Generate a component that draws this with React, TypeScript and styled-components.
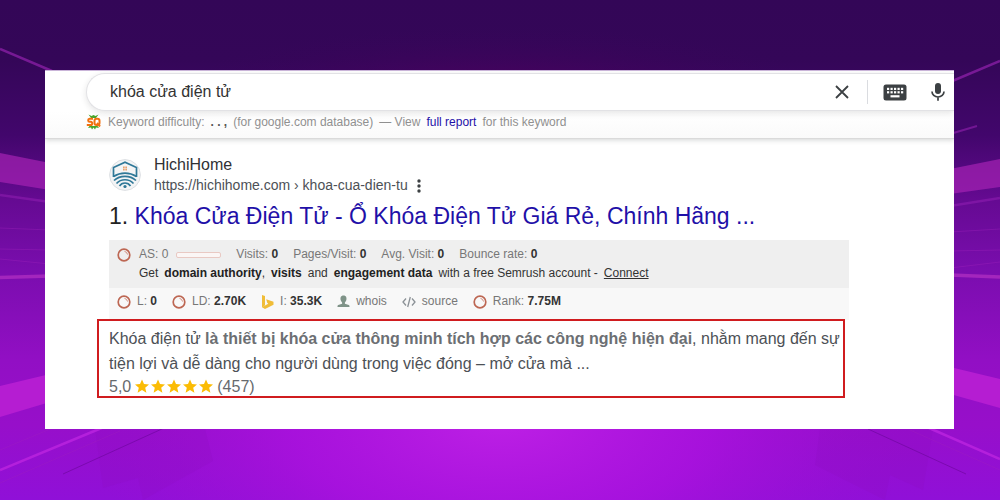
import React from "react";
import styled, { createGlobalStyle } from "styled-components";

const GlobalStyle = createGlobalStyle`
  * { box-sizing: border-box; }
  body { margin: 0; font-family: "Liberation Sans", Arial, sans-serif; }
`;

const Page = styled.main`
  position: relative;
  min-height: 100vh;
  padding: 70px 46px 71px 45px;
  background: linear-gradient(#330657 0%, #340658 12%, #42066c 27%, #650a92 40%, #7a0dae 54%, #920fc4 72%, #970fca 85%, #9010d8 100%);
`;

const Backdrop = styled.svg`
  position: absolute;
  inset: 0;
  width: 100%;
  height: 100%;
`;

const Card = styled.section`
  position: relative;
  overflow: hidden;
  background: #fff;
  border-top: 1px solid #c9b4d8;
  padding-bottom: 31px;
`;

const Header = styled.header`
  padding: 2px 0 8px 41px;
  border-bottom: 1px solid #dadada;
  background: linear-gradient(#fff 60%, #fafafa);
  box-shadow: 0 1px 5px rgba(32, 33, 36, 0.2);
`;

const SearchBar = styled.form`
  display: flex;
  align-items: center;
  height: 38px;
  padding: 0 9px 0 23px;
  border: 1px solid #e2e2e5;
  border-right: 0;
  border-radius: 19px 0 0 19px;
  background: #fff;
  box-shadow: 0 2px 6px rgba(32, 33, 36, 0.12);
`;

const SearchInput = styled.input`
  flex: 1;
  min-width: 0;
  padding: 0;
  border: 0;
  outline: 0;
  background: none;
  color: #333;
  font: 16px/24px "Liberation Sans", Arial, sans-serif;
`;

const IconButton = styled.button`
  display: flex;
  padding: 0;
  border: 0;
  background: none;
  color: #3c4043;
`;

const Divider = styled.span`
  width: 1px;
  height: 24px;
  margin: 0 15px 0 18px;
  background: #dadce0;
`;

const Tools = styled.div`
  display: flex;
  align-items: center;
  gap: 24px;
`;

const Difficulty = styled.div`
  display: flex;
  align-items: center;
  gap: 7px;
  margin-top: 3px;
  color: #909090;
  font-size: 12px;
  line-height: 16px;
  white-space: nowrap;
`;

const Phrases = styled.p`
  display: flex;
  gap: 6px;
  margin: 0;
`;

const Dots = styled.b`
  color: #555;
`;

const ReportLink = styled.a`
  color: #1f10a8;
  text-decoration: none;
`;

const Result = styled.article`
  padding: 15px 105px 0 64px;
`;

const Site = styled.div`
  display: flex;
  align-items: center;
  gap: 13px;
`;

const SiteName = styled.div`
  color: #303134;
  font-size: 16px;
  line-height: 21px;
`;

const SiteUrl = styled.div`
  display: flex;
  align-items: center;
  gap: 8px;
  color: #4d5156;
  font-size: 14px;
  line-height: 21px;
`;

const Title = styled.h3`
  margin: 5px 0 9px;
  color: #222;
  font-size: 23px;
  font-weight: 400;
  line-height: 30px;
  white-space: nowrap;
`;

const TitleLink = styled.a`
  color: #1f10a8;
  text-decoration: none;
`;

const Metrics = styled.div`
  color: #777;
  font-size: 12px;
  line-height: 19px;

  b { color: #333; }
`;

const Traffic = styled.div`
  height: 48px;
  padding: 5px 8px;
  background: #efefef;
`;

const MetricRow = styled.div`
  display: flex;
  align-items: center;
  gap: 15px;
`;

const Metric = styled.span<{ $gap?: number }>`
  display: flex;
  align-items: center;
  gap: ${(p) => p.$gap ?? 6}px;
  white-space: nowrap;
`;

const Bar = styled.span`
  width: 45px;
  height: 6px;
  border: 1px solid #e9c9c3;
  border-radius: 2px;
  background: #fbf6f5;
`;

const Promo = styled.div`
  display: flex;
  gap: 6px;
  padding-left: 22px;
  color: #333;
  white-space: nowrap;

  b { color: #222; }
`;

const ConnectLink = styled.a`
  color: #333;
`;

const Links = styled.div`
  height: 32px;
  padding: 4px 8px;
  background: #f8f8f8;
`;

const Snippet = styled.div`
  margin: -1px 4px 0 -12px;
  padding: 5px 0 0 10px;
  border: 2px solid #d01c1f;
  background: #fff;
  color: #4d5156;
  font-size: 16px;
  line-height: 25px;

  p { margin: 0; }
  b { color: #6c6f73; }
`;

const Rating = styled.div`
  display: flex;
  align-items: center;
  gap: 4px;
  height: 20px;
  color: #666a6e;
`;

const Ring = () => (
  <svg width="14" height="14" viewBox="0 0 14 14" fill="none" aria-hidden="true">
    <circle cx="7" cy="7" r="5.8" stroke="#bd6753" strokeWidth="1.7" />
    <path d="M7.5 3.4a3.7 3.7 0 0 1 3 3.1" stroke="#d18d7e" strokeWidth="1" />
  </svg>
);

const SeoLogo = () => (
  <svg width="15" height="16" viewBox="0 0 15 16" fill="none" aria-hidden="true">
    <path d="M2.500 0.500l3 1.500 2-1 2 1 3-1.500-2.500 3.500H5zM3.500 12h8l1.500 2-3-.5-1 2-1.500-2-1.500 2-1-2-3 .5z" fill="#47a52b" />
    <path d="M7 4.800H3.600c-1.900 0-1.900 3 0 3h1.200c2 0 1.900 3.200-.1 3.200H.8" stroke="#f2700f" strokeWidth="2" />
    <rect x="8.500" y="4.800" width="5" height="6.200" rx="2" stroke="#f2700f" strokeWidth="2" fill="#fff" />
    <path d="M11 9l3 3.500" stroke="#f2700f" strokeWidth="2" />
  </svg>
);

const SiteLogo = () => (
  <svg width="32" height="32" viewBox="0 0 32 32" fill="none" aria-hidden="true">
    <circle cx="16" cy="16" r="15.4" fill="#f3f4f5" stroke="#dcdfe3" />
    <g stroke="#2f7898" strokeWidth="1.7">
      <path d="M4.500 18V8.500L16 3.200l11.500 5.300V18" />
      <path d="M4.500 17.500c7-4.500 16-4.500 23 0M5 21.500c6-5.600 16-5.600 22 0M7.500 24.500c4.500-5 12.500-5 17 0M10.500 27c2.500-4 8.500-4 11 0" />
    </g>
    <path d="M14 7.500h1.700v1.700H14zM16.300 7.500H18v1.700h-1.700zM14 9.800h1.700v1.700H14zM16.300 9.800H18v1.700h-1.700z" fill="#e8a270" />
    <circle cx="16" cy="27.500" r="1.600" fill="#2f7898" />
  </svg>
);

const CloseIcon = () => (
  <svg width="14" height="14" viewBox="0 0 14 14" fill="none" stroke="currentColor" strokeWidth="1.800">
    <path d="M1 1l12 12M13 1L1 13" />
  </svg>
);

const KeyboardIcon = () => (
  <svg width="24" height="17" viewBox="0 0 24 17">
    <rect x="0.500" y="0.500" width="23" height="16" rx="2.500" fill="currentColor" />
    <g fill="#fff">
      {[4, 7.5, 11, 14.5, 18].map((x) => (
        <React.Fragment key={x}>
          <rect x={x} y="3.800" width="2.200" height="2.200" />
          <rect x={x} y="7.200" width="2.200" height="2.200" />
        </React.Fragment>
      ))}
      <rect x="7.500" y="11.200" width="9" height="2.200" />
    </g>
  </svg>
);

const MicIcon = () => (
  <svg width="14" height="20" viewBox="0 0 14 20" fill="none">
    <rect x="4" y="1" width="6" height="11" rx="3" fill="currentColor" />
    <path d="M1 9.500a6 5.500 0 0 0 12 0M7 15v3.800" stroke="currentColor" strokeWidth="1.700" />
  </svg>
);

const MoreIcon = () => (
  <svg width="6" height="16" viewBox="0 0 6 16" fill="currentColor">
    <circle cx="3" cy="3" r="1.700" />
    <circle cx="3" cy="8" r="1.700" />
    <circle cx="3" cy="13" r="1.700" />
  </svg>
);

const BingIcon = () => (
  <svg width="13" height="14" viewBox="0 0 13 14" fill="#f0bd38" aria-hidden="true">
    <path d="M1 0l3 1v9.200L1 12.200zM5.200 4.200L12.500 6.700v3L4 14l-3-1.800 6.200-3.500-1-1z" />
  </svg>
);

const PersonIcon = () => (
  <svg width="13" height="13" viewBox="0 0 13 13" fill="#7f9388" aria-hidden="true">
    <path d="M6.500.5C3.800.5 3.200 2.700 3.600 4.800c.2 1.300.8 2 1.500 2.600v1.300L1.200 10C.6 10.400.5 11 .5 12h12c0-1-.1-1.600-.7-2L7.900 8.700V7.400c.7-.6 1.300-1.300 1.500-2.600C9.800 2.700 9.200.5 6.500.5z" />
  </svg>
);

const CodeIcon = () => (
  <svg width="14" height="12" viewBox="0 0 14 12" fill="none" stroke="#8b9196" strokeWidth="1.300" aria-hidden="true">
    <path d="M4 2.500L1 6l3 3.500M10 2.500L13 6l-3 3.500M8.300 1L5.700 11" />
  </svg>
);

const Stars = () => (
  <svg width="78" height="16" viewBox="0 0 78 16" fill="#fbbc04" role="img" aria-label="5,0">
    {[0, 16, 32, 48, 64].map((x) => (
      <path key={x} transform={`translate(${x} 1)`} d="M7 0.500l2 4.600 5 .4-3.800 3.300 1.200 4.900L7 11.100l-4.400 2.600 1.200-4.900L0 5.500l5-.4z" />
    ))}
  </svg>
);

const BackdropArt = () => (
  <Backdrop viewBox="0 0 1000 500" preserveAspectRatio="none" aria-hidden="true">
    <defs>
      <radialGradient id="floor" gradientUnits="userSpaceOnUse" cx="500" cy="420" r="420" gradientTransform="translate(0 210) scale(1 0.5)">
        <stop offset="0" stopColor="#bd20e5" />
        <stop offset="0.500" stopColor="#ab12df" stopOpacity="0.800" />
        <stop offset="1" stopColor="#9810d2" stopOpacity="0" />
      </radialGradient>
      <radialGradient id="ceiling" gradientUnits="userSpaceOnUse" cx="500" cy="90" r="320" gradientTransform="translate(0 72) scale(1 0.2)">
        <stop offset="0" stopColor="#500060" stopOpacity="0.800" />
        <stop offset="1" stopColor="#39055c" stopOpacity="0" />
      </radialGradient>
    </defs>
    <rect y="200" width="1000" height="300" fill="url(#floor)" />
    <rect width="1000" height="90" fill="url(#ceiling)" />
    <path d="M0 153L50 163V190L0 182zM950 169L1000 159V187L950 194z" fill="#a522b4" fillOpacity="0.700" />
    <path d="M0 386L50 374V402L0 417zM950 367L1000 379V408L950 394z" fill="#b51dd2" />
    <path d="M205 429l8 32-70 39-5-22-35 10-8-59zM820 429l-5 36 70 35 5-25 33 15 10-61z" fill="#8d0dbd" fillOpacity="0.220" />
    <g fill="none" stroke="#a326bd" strokeWidth="2.500">
      <path d="M0 49L52 71M950 82L1000 61" strokeOpacity="0.600" />
      <path d="M950 134L977 126" strokeOpacity="0.500" strokeWidth="2" />
      <path d="M0 277.500L50 276M950 275L1000 277" strokeWidth="3.500" />
      <path d="M0 195L50 202M950 206L1000 198" strokeOpacity="0.400" />
      <path d="M0 228L50 230M950 232L1000 229M0 249L50 250M950 251L1000 250M0 259L50 264M950 268L1000 262" strokeOpacity="0.350" strokeWidth="1" />
      <path d="M0 470L104 427M920 424L1000 459" stroke="#b420dc" />
      <path d="M0 450L55 427M0 483L120 431M910 430L1000 470" strokeOpacity="0.300" strokeWidth="1" />
    </g>
    <path d="M63 474L164 428M868 429L966 474" stroke="#7608a8" strokeOpacity="0.800" fill="none" />
  </Backdrop>
);

export default function App() {
  return (
    <>
      <GlobalStyle />
      <Page>
        <BackdropArt />
        <Card>
          <Header>
            <SearchBar onSubmit={(e) => e.preventDefault()}>
              <SearchInput aria-label="Search" defaultValue="khóa cửa điện tử" />
              <IconButton type="reset" aria-label="Clear"><CloseIcon /></IconButton>
              <Divider />
              <Tools>
                <IconButton type="button" aria-label="Keyboard"><KeyboardIcon /></IconButton>
                <IconButton type="button" aria-label="Voice search"><MicIcon /></IconButton>
              </Tools>
            </SearchBar>
            <Difficulty>
              <SeoLogo />
              <Phrases>
                <span>Keyword difficulty:</span>
                <Dots>. . ,</Dots>
                <span>(for google.com database)</span>
                <span>— View</span>
                <ReportLink href="#report">full report</ReportLink>
                <span>for this keyword</span>
              </Phrases>
            </Difficulty>
          </Header>

          <Result>
            <Site>
              <SiteLogo />
              <div>
                <SiteName>HichiHome</SiteName>
                <SiteUrl>
                  <span>https://hichihome.com › khoa-cua-dien-tu</span>
                  <IconButton type="button" aria-label="More"><MoreIcon /></IconButton>
                </SiteUrl>
              </div>
            </Site>
            <Title>
              1. <TitleLink href="#result">Khóa Cửa Điện Tử - Ổ Khóa Điện Tử Giá Rẻ, Chính Hãng ...</TitleLink>
            </Title>

            <Metrics>
              <Traffic>
                <MetricRow>
                  <Metric $gap={8}><Ring /><span>AS: 0</span><Bar /></Metric>
                  <Metric><span>Visits: <b>0</b></span></Metric>
                  <Metric><span>Pages/Visit: <b>0</b></span></Metric>
                  <Metric><span>Avg. Visit: <b>0</b></span></Metric>
                  <Metric><span>Bounce rate: <b>0</b></span></Metric>
                </MetricRow>
                <Promo>
                  <span>Get</span>
                  <span><b>domain authority</b>,</span>
                  <b>visits</b>
                  <span>and</span>
                  <b>engagement data</b>
                  <span>with a free Semrush account -</span>
                  <ConnectLink href="#connect">Connect</ConnectLink>
                </Promo>
              </Traffic>
              <Links>
                <MetricRow>
                  <Metric><Ring /><span>L: <b>0</b></span></Metric>
                  <Metric><Ring /><span>LD: <b>2.70K</b></span></Metric>
                  <Metric><BingIcon /><span>I: <b>35.3K</b></span></Metric>
                  <Metric><PersonIcon /><span>whois</span></Metric>
                  <Metric><CodeIcon /><span>source</span></Metric>
                  <Metric><Ring /><span>Rank: <b>7.75M</b></span></Metric>
                </MetricRow>
              </Links>
            </Metrics>

            <Snippet>
              <p>
                Khóa điện tử <b>là thiết bị khóa cửa thông minh tích hợp các công nghệ hiện đại</b>, nhằm mang đến sự
                <br />
                tiện lợi và dễ dàng cho người dùng trong việc đóng – mở cửa mà ...
              </p>
              <Rating>
                <span>5,0</span>
                <Stars />
                <span>(457)</span>
              </Rating>
            </Snippet>
          </Result>
        </Card>
      </Page>
    </>
  );
}
